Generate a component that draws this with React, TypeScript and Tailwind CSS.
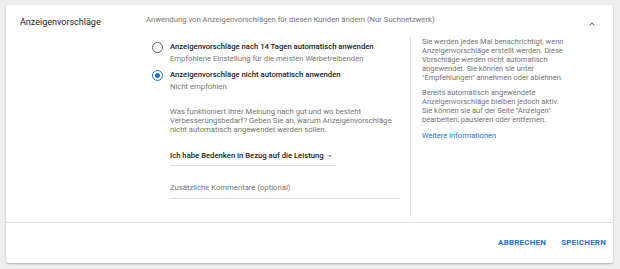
import React from "react";

const font = { fontFamily: "Roboto, 'Noto Sans', Arial, sans-serif" };

function Radio({ checked }: { checked: boolean }) {
  return checked ? (
    <span className="mt-[0.5px] flex h-[11px] w-[11px] shrink-0 items-center justify-center rounded-full border-[1.5px] border-[#1a73e8]">
      <span className="h-[5px] w-[5px] rounded-full bg-[#1a73e8]" />
    </span>
  ) : (
    <span className="mt-[0.5px] h-[11px] w-[11px] shrink-0 rounded-full border-[1.5px] border-[#5f6368]" />
  );
}

export default function App() {
  return (
    <div
      className="h-[269px] w-[620px] bg-[#eeeeee] pl-[6px] pt-[5px]"
      style={font}
    >
      <div className="flex h-[258px] w-[607px] flex-col rounded-[2px] bg-white shadow-[0_1px_2px_rgba(0,0,0,0.25)]">
        <div className="flex flex-1">
          <div className="w-[140px] pl-[14px] pt-[12px] text-[9px] leading-[11px] text-[#212121]">
            Anzeigenvorschläge
          </div>
          <div className="flex flex-1 flex-col pt-[10px]">
            <div className="flex items-start justify-between pr-[16px]">
              <div className="text-[7.7px] leading-[10px] text-[#757575]">
                Anwendung von Anzeigenvorschlägen für diesen Kunden ändern (Nur
                Suchnetzwerk)
              </div>
              <svg
                width="10"
                height="10"
                viewBox="0 0 24 24"
                className="mt-[4px]"
              >
                <path
                  d="M7.41 15.41 12 10.83l4.59 4.58L18 14l-6-6-6 6z"
                  fill="#5f6368"
                />
              </svg>
            </div>
            <div className="mt-[8px] flex">
              <div className="w-[264px] pl-[6px] pt-[4px]">
                <div className="flex items-start gap-[7px]">
                  <Radio checked={false} />
                  <div>
                    <div className="text-[7.7px] font-medium leading-[12px] text-[#202124]">
                      Anzeigenvorschläge nach 14 Tagen automatisch anwenden
                    </div>
                    <div className="text-[7.7px] leading-[12px] text-[#757575]">
                      Empfohlene Einstellung für die meisten Werbetreibenden
                    </div>
                  </div>
                </div>
                <div className="mt-[4px] flex items-start gap-[7px]">
                  <Radio checked={true} />
                  <div>
                    <div className="text-[7.7px] font-medium leading-[12px] text-[#202124]">
                      Anzeigenvorschläge nicht automatisch anwenden
                    </div>
                    <div className="text-[7.7px] leading-[12px] text-[#757575]">
                      Nicht empfohlen
                    </div>
                  </div>
                </div>
                <div className="ml-[18px] mt-[14px] text-[7.7px] leading-[9px] text-[#757575]">
                  <div className="whitespace-nowrap">
                    Was funktioniert Ihrer Meinung nach gut und wo besteht
                  </div>
                  <div className="whitespace-nowrap">
                    Verbesserungsbedarf? Geben Sie an, warum Anzeigenvorschläge
                  </div>
                  <div className="whitespace-nowrap">
                    nicht automatisch angewendet werden sollen.
                  </div>
                </div>
                <div className="ml-[18px] mt-[17px] flex w-[166px] items-center justify-between border-b border-[#e0e0e0] pb-[4px]">
                  <span className="text-[7.7px] font-medium leading-[10px] text-[#202124]">
                    Ich habe Bedenken in Bezug auf die Leistung
                  </span>
                  <svg width="8" height="8" viewBox="0 0 24 24" className="mr-[2px]">
                    <path d="M7 10l5 5 5-5z" fill="#5f6368" />
                  </svg>
                </div>
                <div className="ml-[18px] mt-[17px] w-[230px] border-b border-[#e0e0e0] pb-[5px] text-[7.7px] leading-[10px] text-[#757575]">
                  Zusätzliche Kommentare (optional)
                </div>
              </div>
              <div className="h-[180px] border-l border-[#e0e0e0] pl-[11px] text-[7.5px] leading-[9px] text-[#757575]">
                <div className="whitespace-nowrap">
                  Sie werden jedes Mal benachrichtigt, wenn
                </div>
                <div className="whitespace-nowrap">
                  Anzeigenvorschläge erstellt werden. Diese
                </div>
                <div className="whitespace-nowrap">
                  Vorschläge werden nicht automatisch
                </div>
                <div className="whitespace-nowrap">
                  angewendet. Sie können sie unter
                </div>
                <div className="whitespace-nowrap">
                  "Empfehlungen" annehmen oder ablehnen.
                </div>
                <div className="mt-[6px] whitespace-nowrap">
                  Bereits automatisch angewendete
                </div>
                <div className="whitespace-nowrap">
                  Anzeigenvorschläge bleiben jedoch aktiv.
                </div>
                <div className="whitespace-nowrap">
                  Sie können sie auf der Seite "Anzeigen"
                </div>
                <div className="whitespace-nowrap">
                  bearbeiten, pausieren oder entfernen.
                </div>
                <div className="mt-[7px] text-[#1a73e8]">Weitere Informationen</div>
              </div>
            </div>
          </div>
        </div>
        <div className="flex h-[41px] items-center justify-end gap-[15px] border-t border-[#e0e0e0] pr-[7px]">
          <span className="text-[8px] font-bold tracking-[0.2px] text-[#1a73e8]">
            ABBRECHEN
          </span>
          <span className="text-[8px] font-bold tracking-[0.2px] text-[#1a73e8]">
            SPEICHERN
          </span>
        </div>
      </div>
    </div>
  );
}
